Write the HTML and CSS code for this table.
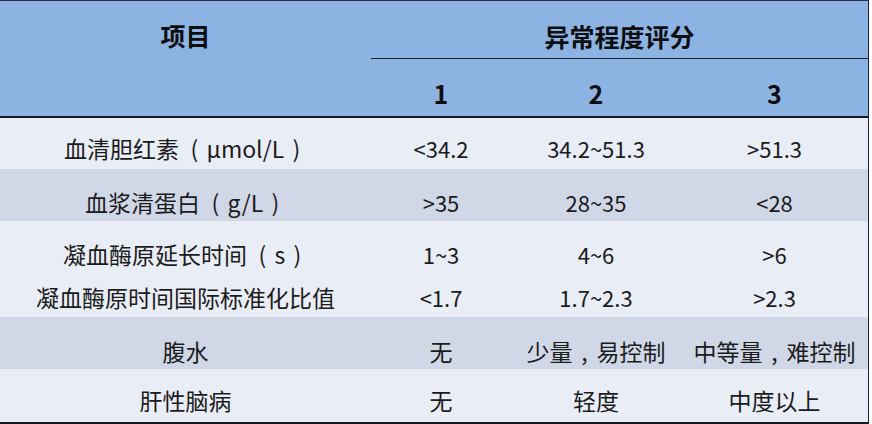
FILE: index.html
```html
<!DOCTYPE html>
<html lang="zh-CN">
<head>
<meta charset="utf-8">
<title>Child-Pugh 评分</title>
<link rel="stylesheet" href="styles.css">
</head>
<body>
<div class="score-table">
  <div class="cell head item">项目</div>
  <div class="cell head group">异常程度评分</div>
  <div class="cell head sub">1</div>
  <div class="cell head sub">2</div>
  <div class="cell head sub">3</div>

  <div class="row light r1">
    <div class="cell">血清胆红素<span class="paren open">(</span>μmol/L<span class="paren close">)</span></div>
    <div class="cell num">&lt;34.2</div>
    <div class="cell num">34.2~51.3</div>
    <div class="cell num">&gt;51.3</div>
  </div>
  <div class="row dark r2">
    <div class="cell">血浆清蛋白<span class="paren open">(</span>g/L<span class="paren close">)</span></div>
    <div class="cell num">&gt;35</div>
    <div class="cell num">28~35</div>
    <div class="cell num">&lt;28</div>
  </div>
  <div class="row light r3">
    <div class="cell">凝血酶原延长时间<span class="paren open">(</span>s<span class="paren close">)</span></div>
    <div class="cell num">1~3</div>
    <div class="cell num">4~6</div>
    <div class="cell num">&gt;6</div>
  </div>
  <div class="row light r4">
    <div class="cell">凝血酶原时间国际标准化比值</div>
    <div class="cell num">&lt;1.7</div>
    <div class="cell num">1.7~2.3</div>
    <div class="cell num">&gt;2.3</div>
  </div>
  <div class="row dark r5">
    <div class="cell">腹水</div>
    <div class="cell">无</div>
    <div class="cell">少量<span class="comma">,</span>易控制</div>
    <div class="cell">中等量<span class="comma">,</span>难控制</div>
  </div>
  <div class="row light r6">
    <div class="cell">肝性脑病</div>
    <div class="cell">无</div>
    <div class="cell">轻度</div>
    <div class="cell">中度以上</div>
  </div>
</div>
</body>
</html>
```
FILE: styles.css
```css
html, body {
  margin: 0;
  padding: 0;
  background: #ffffff;
}

.score-table {
  display: grid;
  grid-template-columns: 371px 140px 170px 187px;
  grid-template-rows: 58px 59px 51px 52px 54px 42px 52px 53px;
  width: 868px;
  border-top: 1px solid #27303c;
  border-right: 1px solid #1c2430;
  border-bottom: 2px solid #161b22;
  font-family: "Noto Sans CJK SC", "Microsoft YaHei", sans-serif;
  font-size: 23px;
  color: #1b1b1b;
}

.row {
  display: contents;
}

.cell {
  box-sizing: border-box;
  display: flex;
  align-items: center;
  justify-content: center;
  line-height: 1;
  white-space: nowrap;
}

.paren {
  display: inline-block;
}

.paren.open {
  padding-left: 0.5em;
  padding-right: 0.36em;
}

.paren.close {
  padding-left: 0.36em;
  padding-right: 0.3em;
}

.comma {
  display: inline-block;
  padding: 0 0.38em;
}

.num {
  font-size: 22px;
}

.head {
  background: #8db3e2;
  font-size: 25px;
  font-weight: 700;
  color: #0e0e10;
}

.item {
  grid-row: span 2;
  align-items: flex-start;
  padding-top: 22px;
  border-bottom: 2px solid #141a24;
}

.group {
  grid-column: span 3;
  padding-top: 13px;
  border-bottom: 1px solid #1a2230;
}

.sub {
  padding-top: 12px;
  border-bottom: 2px solid #141a24;
}

.light > .cell {
  background: #e9edf5;
}

.dark > .cell {
  background: #d0d8e8;
}

.r1 > .cell { padding-top: 9px; }
.r2 > .cell { padding-top: 14px; }
.r3 > .cell { padding-top: 12px; }
.r4 > .cell { padding-top: 2px; }
.r5 > .cell { padding-top: 16px; }
.r6 > .cell { padding-top: 9px; }
```
